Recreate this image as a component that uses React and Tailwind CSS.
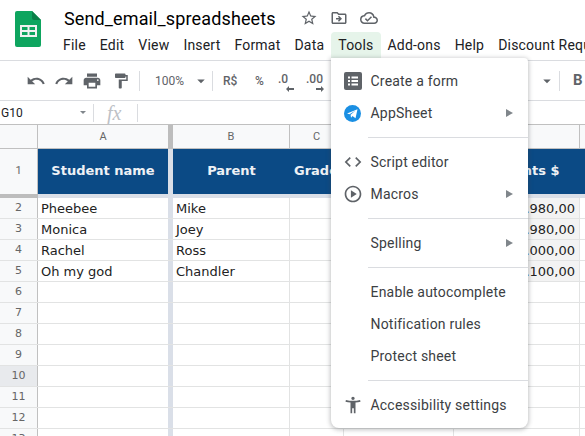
import { MdUndo, MdRedo, MdPrint, MdFormatPaint, MdStarBorder, MdOutlineDriveFileMove, MdOutlineCloudDone, MdArrowDropDown, MdCode, MdOutlinePlayCircle, MdAccessibilityNew } from "react-icons/md";

const menuBar = ["File", "Edit", "View", "Insert", "Format", "Data", "Tools", "Add-ons", "Help", "Discount Requests"];

const students = [
  ["Pheebee", "Mike", "R$ 1.980,00"],
  ["Monica", "Joey", "R$ 1.980,00"],
  ["Rachel", "Ross", "R$ 3.000,00"],
  ["Oh my god", "Chandler", "R$ 2.100,00"],
];

const emptyRows = [6, 7, 8, 9, 10, 11, 12, 13];

function Cell({ className = "", children }) {
  return <div className={"h-full shrink-0 border-r border-[#e2e3e3] " + className}>{children}</div>;
}

function DataRow({ num, active, name, parent, amount }) {
  return (
    <div className="flex h-[21px] shrink-0 border-b border-[#e2e3e3] text-[13px] leading-[22px] text-[#222]">
      <div className={"w-[38px] shrink-0 border-r border-[#c0c0c0] text-center text-[11px] leading-[20px] text-[#666] " + (active ? "bg-[#e8eaed]" : "bg-[#f8f9fa]")}>{num}</div>
      <div className="w-[130px] shrink-0 pl-[3px]">{name}</div>
      <div className="w-[5px] shrink-0 bg-[#dadfe8]" />
      <Cell className="w-[117px] pl-[3px]">{parent}</Cell>
      <Cell className="w-[54px]" />
      <Cell className="w-[110px]" />
      <Cell className={"w-[126px] pr-[4px] text-right " + (amount ? "bg-[#f3f3f3]" : "")}>{amount}</Cell>
    </div>
  );
}

function MenuItem({ icon, label, arrow }) {
  return (
    <div className="flex h-[32px] items-center text-[14px] tracking-[0.2px] text-[#3c4043]">
      <div className="flex w-[39.5px] shrink-0 justify-center pl-[4px]">{icon}</div>
      <span className="flex-1">{label}</span>
      {arrow && <span className="mr-[15px] h-0 w-0 border-y-[4px] border-l-[7px] border-y-transparent border-l-[#80868b]" />}
    </div>
  );
}

function Separator({ color = "border-[#dadce0]" }) {
  return <div className={"my-[8px] ml-[37px] border-t " + color} />;
}

function ToolDivider({ className = "" }) {
  return <div className={"h-[20px] w-px shrink-0 bg-[#dadce0] " + className} />;
}

// .0 / .00 buttons, with the little arrow underneath
function DecimalButton({ label, flip, className = "" }) {
  return (
    <div className={"flex shrink-0 flex-col items-start " + className}>
      <span className="text-[12px] font-medium leading-[13px]">{label}</span>
      <svg width="8" height="6" viewBox="0 0 8 6" className={"self-end " + (flip ? "rotate-180" : "")}>
        <path d="M0 3l3-3v2h5v2H3v2z" fill="#5f6368" />
      </svg>
    </div>
  );
}

export default function App() {
  return (
    <div className="relative h-[436px] w-[585px] overflow-hidden bg-white font-['Roboto',sans-serif]">
      {/* title + menu bar */}
      <div className="flex h-[61px] border-b border-[#dadce0]">
        <div className="w-[56px] shrink-0 pl-[15px] pt-[11px]">
          <svg width="26" height="36" viewBox="0 0 26 36">
            <path d="M2 0h15l9 9v25a2 2 0 0 1-2 2H2a2 2 0 0 1-2-2V2a2 2 0 0 1 2-2z" fill="#0ea55f" />
            <path d="M17 0l9 9h-7a2 2 0 0 1-2-2z" fill="#0b7f48" />
            <path d="M5 14h17v12H5z M7 16v3h5.500v-3z M14.500 16v3H20v-3z M7 21v3h5.500v-3z M14.500 21v3H20v-3z" fill="#f1f1f1" fillRule="evenodd" />
          </svg>
        </div>
        <div className="min-w-0 flex-1">
          <div className="flex h-[32px] items-center whitespace-nowrap pl-[8px] pt-[4px] text-[18px] tracking-[0.13px] text-black">
            <span className="w-[237px]">Send_email_spreadsheets</span>
            <MdStarBorder size={18} className="-ml-[1px] text-[#5f6368]" />
            <MdOutlineDriveFileMove size={18} className="ml-[12px] text-[#5f6368]" />
            <MdOutlineCloudDone size={18} className="ml-[12px] text-[#5f6368]" />
          </div>
          <div className="flex h-[26px] whitespace-nowrap text-[14px] leading-[26px] tracking-[0.2px] text-[#202124]">
            {menuBar.map((m) => (
              <span key={m} className={"shrink-0 px-[7px] " + (m === "Tools" ? "rounded-t bg-[#e6f4ea]" : "")}>{m}</span>
            ))}
          </div>
        </div>
      </div>

      {/* toolbar */}
      <div className="flex h-[40px] items-center border-b border-[#dadce0] text-[#5f6368]">
        <MdUndo size={20} className="ml-[26px] shrink-0" />
        <MdRedo size={20} className="ml-[8px] shrink-0" />
        <MdPrint size={20} className="ml-[8px] shrink-0" />
        <MdFormatPaint size={18} className="ml-[10px] shrink-0" />
        <ToolDivider className="ml-[9px]" />
        <span className="ml-[15px] w-[29px] shrink-0 text-[12px]">100%</span>
        <MdArrowDropDown size={18} className="ml-[8px] shrink-0" />
        <ToolDivider className="ml-[2px]" />
        <span className="ml-[10px] w-[16px] shrink-0 text-[12px] font-medium">R$</span>
        <span className="ml-[16px] w-[10px] shrink-0 text-[12px] font-medium">%</span>
        <DecimalButton label=".0" className="ml-[13px] mt-[4px] w-[16px]" />
        <DecimalButton label=".00" flip className="ml-[12px] mt-[4px] w-[18px]" />
        <MdArrowDropDown size={18} className="ml-[214px] shrink-0" />
        <ToolDivider className="ml-[3px]" />
        <span className="ml-[13px] shrink-0 text-[15px] font-bold">B</span>
      </div>

      {/* formula bar */}
      <div className="flex h-[24px] items-center border-b border-[#c0c0c0] text-[12px] text-[#202124]">
        <span className="w-[80px] shrink-0 pl-[1px]">G10</span>
        <span className="h-0 w-0 shrink-0 border-x-[3px] border-t-[3px] border-x-transparent border-t-[#80868b]" />
        <div className="ml-[7px] h-[18px] w-px shrink-0 bg-[#dadce0]" />
        <span className="ml-[13px] w-[30px] shrink-0 font-['Liberation_Serif',serif] text-[20px] italic leading-[20px] text-[#bdc1c6]">fx</span>
        <div className="h-[18px] w-px shrink-0 bg-[#dadce0]" />
      </div>

      {/* column letters */}
      <div className="flex h-[24px] border-b border-[#c0c0c0] bg-[#f8f9fa] text-center text-[11px] leading-[23px] text-[#666]">
        <div className="w-[38px] shrink-0 border-r border-[#c0c0c0]" />
        <div className="w-[130px] shrink-0">A</div>
        <div className="w-[5px] shrink-0 bg-[#bdbdbd]" />
        <div className="w-[117px] shrink-0 border-r border-[#c0c0c0]">B</div>
        <div className="w-[54px] shrink-0 border-r border-[#c0c0c0]">C</div>
        <div className="w-[110px] shrink-0 border-r border-[#c0c0c0]">D</div>
        <div className="w-[126px] shrink-0 border-r border-[#c0c0c0]">E</div>
      </div>

      {/* header row */}
      <div className="flex h-[45px] whitespace-nowrap font-['DejaVu_Sans',sans-serif] text-[13px] font-bold leading-[44px] text-[#eef1f5]">
        <div className="flex w-[38px] shrink-0 justify-center border-r border-[#c0c0c0] bg-[#f8f9fa] font-['Roboto',sans-serif] text-[11px] font-normal text-[#666]">1</div>
        <div className="w-[130px] shrink-0 bg-[#0b4a85] text-center">Student name</div>
        <div className="w-[5px] shrink-0 bg-[#dadfe8]" />
        <div className="w-[117px] shrink-0 bg-[#0b4a85] text-center">Parent</div>
        <div className="w-[54px] shrink-0 bg-[#0b4a85] pl-[4px]">Grade</div>
        <div className="w-[110px] shrink-0 bg-[#0b4a85]" />
        <div className="w-[126px] shrink-0 bg-[#0b4a85] text-center">Payments $</div>
        <div className="flex-1 bg-[#0b4a85]" />
      </div>

      {/* frozen row line */}
      <div className="flex h-[4px]">
        <div className="w-[38px] shrink-0 bg-[#bdbdbd]" />
        <div className="flex-1 bg-[#dadfe8]" />
      </div>

      {/* rows */}
      <div className="font-['DejaVu_Sans',sans-serif]">
        {students.map((s, i) => (
          <DataRow key={s[0]} num={i + 2} name={s[0]} parent={s[1]} amount={s[2]} />
        ))}
        {emptyRows.map((n) => (
          <DataRow key={n} num={n} active={n === 10} />
        ))}
      </div>

      {/* tools dropdown */}
      <div className="absolute left-[331px] top-[58px] w-[197px] rounded-b-lg rounded-tr-sm bg-white py-[7px] shadow-[0_1px_4px_1px_rgba(60,64,67,0.3)]">
        <MenuItem
          label="Create a form"
          icon={
            <svg width="18" height="18" viewBox="0 0 18 18">
              <rect width="18" height="18" rx="2" fill="#5f6368" />
              <path d="M4 4.500h2v2H4z M4 8h2v2H4z M4 11.500h2v2H4z M7.500 4.500H14v2H7.500z M7.500 8H14v2H7.500z M7.500 11.500H14v2H7.500z" fill="#fff" />
            </svg>
          }
        />
        <MenuItem
          label="AppSheet"
          arrow
          icon={
            <svg width="17" height="17" viewBox="0 0 17 17">
              <circle cx="8.500" cy="8.500" r="8.500" fill="#1a8fe3" />
              <path d="M3 8.500l10.500-4.300-2 9-3-2.200-1.500 1.700-.4-2.900 5-4.300-6.100 3.700z" fill="#fff" />
            </svg>
          }
        />
        <Separator />
        <MenuItem label="Script editor" icon={<MdCode size={20} className="text-[#5f6368]" />} />
        <MenuItem label="Macros" arrow icon={<MdOutlinePlayCircle size={20} className="text-[#5f6368]" />} />
        <Separator />
        <MenuItem label="Spelling" arrow />
        <Separator />
        <MenuItem label="Enable autocomplete" />
        <MenuItem label="Notification rules" />
        <MenuItem label="Protect sheet" />
        <Separator />
        <MenuItem label="Accessibility settings" icon={<MdAccessibilityNew size={20} className="text-[#5f6368]" />} />
      </div>
    </div>
  );
}
